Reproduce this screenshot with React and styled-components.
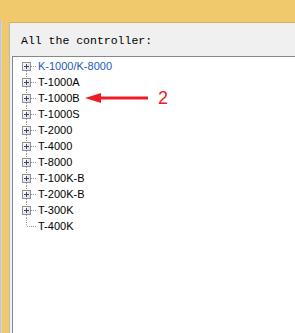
import React from 'react';
import styled, { createGlobalStyle } from 'styled-components';

const controllers = [
  'K-1000/K-8000',
  'T-1000A',
  'T-1000B',
  'T-1000S',
  'T-2000',
  'T-4000',
  'T-8000',
  'T-100K-B',
  'T-200K-B',
  'T-300K',
  'T-400K',
];

const GlobalStyle = createGlobalStyle`
  html, body {
    margin: 0;
    padding: 0;
    overflow: hidden;
  }
`;

const Frame = styled.div`
  display: flex;
  width: 295px;
  height: 333px;
  background: #f0c96c;
`;

const Edge = styled.div`
  width: 2px;
  margin-top: 20px;
  background: linear-gradient(to right, #bdbdbd, #dcdcdc);
`;

const Panel = styled.div`
  flex: 1;
  display: flex;
  flex-direction: column;
  margin: 22px 0 0 7px;
  padding-left: 2px;
  background: #f0f0f0;
  border-top: 1px solid #d2b063;
  border-left: 1px solid #b9b9b9;
`;

const Label = styled.div`
  height: 33px;
  box-sizing: border-box;
  padding: 11px 0 0 9px;
  font-family: 'Liberation Mono', monospace;
  font-size: 11.5px;
  line-height: 14px;
  color: #000;
`;

const TreeBox = styled.div`
  position: relative;
  flex: 1;
  padding-top: 1px;
  background: #fff;
  border-top: 1px solid #828790;
  border-left: 1px solid #828790;
`;

const Row = styled.div`
  display: flex;
  align-items: center;
  height: 16px;
  font-family: 'Liberation Sans', Arial, sans-serif;
  font-size: 11px;
  line-height: 16px;
  color: ${(p) => (p.$hot ? '#1a5bb5' : '#000')};
`;

const Connector = styled.svg`
  flex: none;
  display: block;
  width: 25px;
  height: 16px;
`;

const Annotation = styled.div`
  position: absolute;
  left: 72px;
  top: 32px;
  display: flex;
  align-items: center;
  gap: 10px;
  height: 18px;
`;

const Callout = styled.span`
  font-family: 'Liberation Sans', Arial, sans-serif;
  font-size: 18px;
  line-height: 18px;
  color: #ec1c24;
`;

const Lines = ({ first, last, expandable }) => (
  <Connector viewBox="0 0 25 16">
    <g stroke="#a0a0a0" strokeWidth="1" strokeDasharray="1 1" fill="none">
      {!first && <line x1="13.5" y1="0" x2="13.5" y2={expandable ? 4 : 8} />}
      {!last && <line x1="13.5" y1="13" x2="13.5" y2="16" />}
      <line x1={expandable ? 18 : 14} y1="8.5" x2="23" y2="8.5" />
    </g>
    {expandable && (
      <g>
        <defs>
          <linearGradient id="boxFill" x1="0" y1="0" x2="1" y2="1">
            <stop offset="0" stopColor="#ffffff" />
            <stop offset="1" stopColor="#d8d8d8" />
          </linearGradient>
        </defs>
        <rect x="9.5" y="4.5" width="8" height="8" fill="url(#boxFill)" stroke="#919191" />
        <line x1="11" y1="8.5" x2="16" y2="8.5" stroke="#2c4a86" />
        <line x1="13.5" y1="6" x2="13.5" y2="11" stroke="#2c4a86" />
      </g>
    )}
  </Connector>
);

const Arrow = () => (
  <svg width="63" height="16" viewBox="0 0 63 16" style={{ display: 'block' }}>
    <polygon points="0,8 16,3 16,13" fill="#ec1c24" />
    <rect x="14" y="6.5" width="49" height="3" fill="#ec1c24" />
  </svg>
);

const App = () => {
  return (
    <>
      <GlobalStyle />
      <Frame>
        <Edge />
        <Panel>
          <Label>All the controller:</Label>
          <TreeBox>
            {controllers.map((name, i) => {
              const last = i === controllers.length - 1;
              return (
                <Row key={name} $hot={i === 0}>
                  <Lines first={i === 0} last={last} expandable={!last} />
                  {name}
                </Row>
              );
            })}
            <Annotation>
              <Arrow />
              <Callout>2</Callout>
            </Annotation>
          </TreeBox>
        </Panel>
      </Frame>
    </>
  );
};

export default App;
